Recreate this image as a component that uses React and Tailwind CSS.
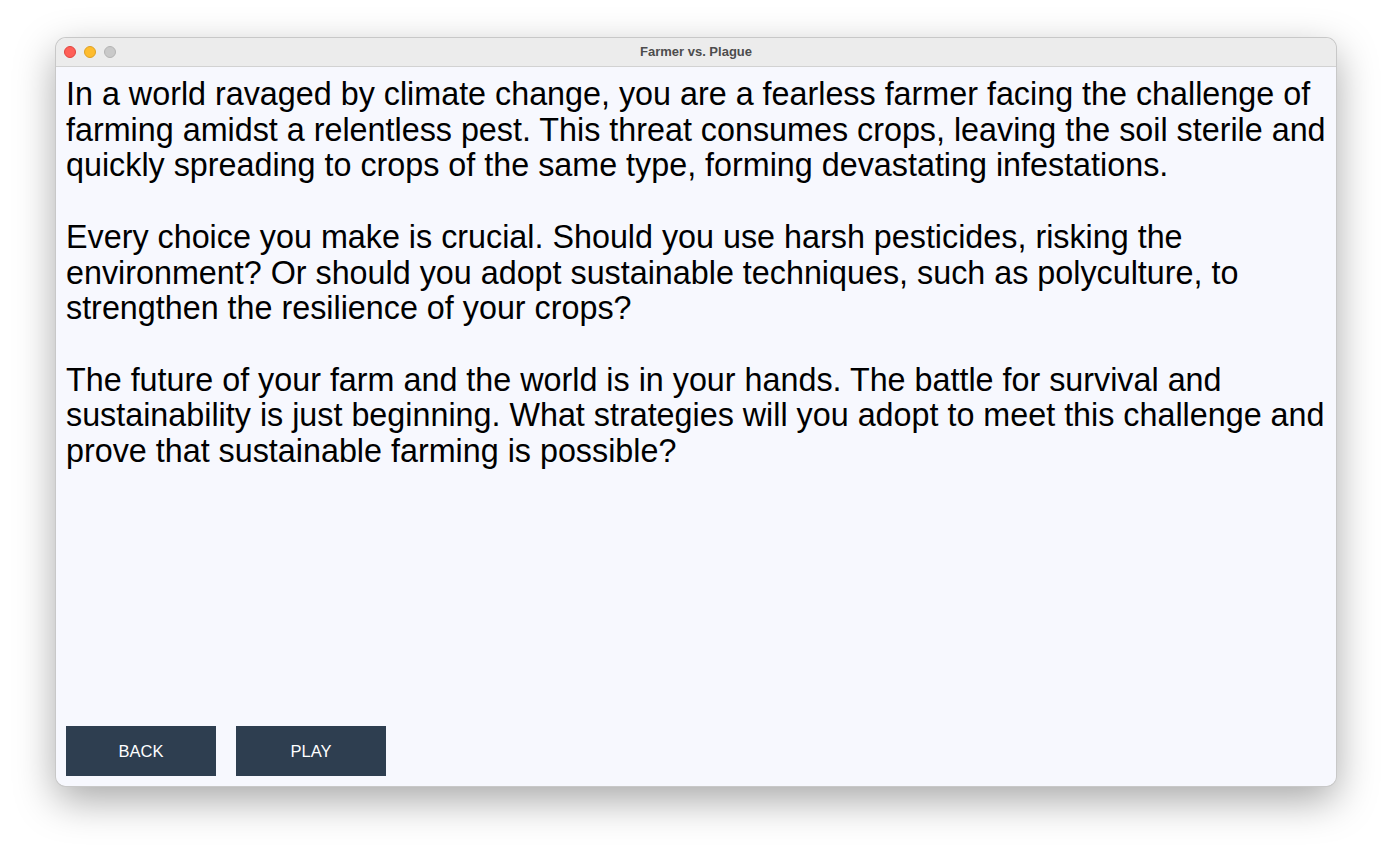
const PARAS = [
  [
    'In a world ravaged by climate change, you are a fearless farmer facing the challenge of',
    'farming amidst a relentless pest. This threat consumes crops, leaving the soil sterile and',
    'quickly spreading to crops of the same type, forming devastating infestations.',
  ],
  [
    'Every choice you make is crucial. Should you use harsh pesticides, risking the',
    'environment? Or should you adopt sustainable techniques, such as polyculture, to',
    'strengthen the resilience of your crops?',
  ],
  [
    'The future of your farm and the world is in your hands. The battle for survival and',
    'sustainability is just beginning. What strategies will you adopt to meet this challenge and',
    'prove that sustainable farming is possible?',
  ],
]

export default function App() {
  return (
    <div className="w-[1392px] h-[860px] bg-white pt-[38px] pl-[56px]" style={{ fontFamily: '"Liberation Sans", Arial, sans-serif' }}>
      <div className="w-[1280px] h-[748px] rounded-[10px] flex flex-col overflow-hidden ring-1 ring-[#c8c8c8] shadow-[0_14px_40px_rgba(0,0,0,0.35)]">
        {/* Title bar */}
        <div className="relative h-[29px] shrink-0 bg-[#ececec] border-b border-[#d2d2d2] flex items-center justify-center">
          <div className="absolute left-[8px] top-[8px] flex gap-[8px]">
            <span className="w-[12px] h-[12px] rounded-full bg-[#fe5f57] border border-[#e0443e]" />
            <span className="w-[12px] h-[12px] rounded-full bg-[#febc2e] border border-[#dea123]" />
            <span className="w-[12px] h-[12px] rounded-full bg-[#c9c9c9] border border-[#b4b4b4]" />
          </div>
          <span className="text-[13px] font-bold text-[#4d4d4d]">Farmer vs. Plague</span>
        </div>

        {/* Content */}
        <div className="flex-1 bg-[#f7f8fe] p-[10px] flex flex-col">
          <div className="flex-1 flex flex-col gap-[35.7px] text-[32.3px] leading-[35.7px] text-black">
            {PARAS.map((lines, i) => (
              <p key={i}>
                {lines.map(l => (
                  <span key={l} className="block whitespace-nowrap">{l}</span>
                ))}
              </p>
            ))}
          </div>
          <div className="flex gap-[20px]">
            <button className="w-[150px] h-[50px] bg-[#2e3e50] text-white text-[16.5px]">BACK</button>
            <button className="w-[150px] h-[50px] bg-[#2e3e50] text-white text-[16.5px]">PLAY</button>
          </div>
        </div>
      </div>
    </div>
  )
}
